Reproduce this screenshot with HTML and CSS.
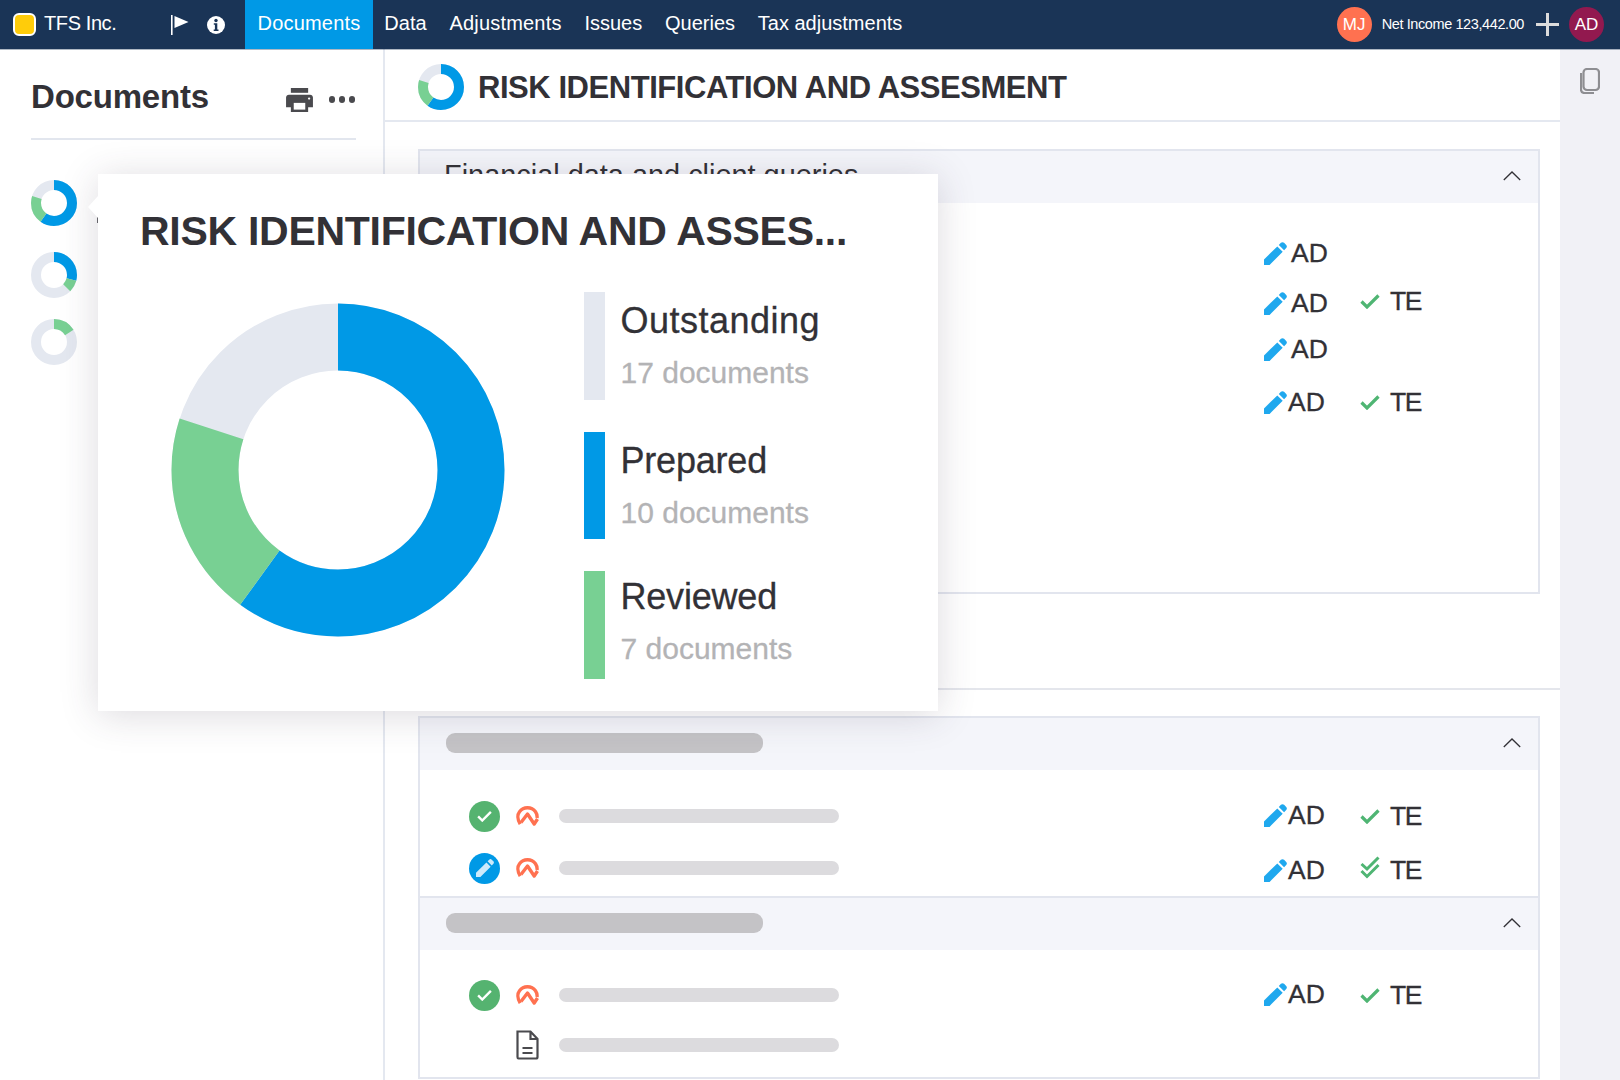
FILE: index.html
```html
<!DOCTYPE html>
<html lang="en">
<head>
<meta charset="utf-8">
<title>Documents</title>
<link rel="stylesheet" href="styles.css">
</head>
<body>
<svg class="defs" width="0" height="0" aria-hidden="true">
  <defs>
    <symbol id="i-pencil" viewBox="0 0 23 23"><path d="M0 17.500L13.300 4.400l5.400 5.400L5.600 23H0zM14.800 2.900L16.900.8c.9-.9 2.300-.9 3.200 0l2.100 2.100c.9.900.9 2.300 0 3.200l-2.100 2.100z"/></symbol>
    <symbol id="i-check" viewBox="0 0 20 16"><path d="M1.5 8.5l5.5 5.5L18.5 2.5" fill="none" stroke="currentColor" stroke-width="3.2"/></symbol>
    <symbol id="i-double" viewBox="0 0 20 23"><path d="M1.5 8l5.5 5L18.5 1.5M1.5 15l5.5 5.5L18.5 9" fill="none" stroke="currentColor" stroke-width="3"/></symbol>
    <symbol id="i-arch" viewBox="0 0 23 20"><path d="M4.200 18.200C1.300 13.500 1.300 8.500 3.500 5.700 5.300 3.200 8.500 1.700 11.500 1.700c3.200 0 6.200 1.500 8 4 1.300 1.900 1.800 4.200 1.500 6.300" fill="none" stroke="currentColor" stroke-width="3.400"/><path d="M5 16.500l6.500-8.500 6.700 10 3.300-5" fill="none" stroke="currentColor" stroke-width="3.400" stroke-linejoin="round"/></symbol>
    <symbol id="i-doc" viewBox="0 0 23 30"><path d="M1.500 1.500h13l7 7.500v18c0 .8-.7 1.500-1.500 1.500H2.500c-.6 0-1-.5-1-1.500zM14.500 1.500V9h7M6.500 18h10M6.500 23h10" fill="none" stroke="currentColor" stroke-width="2.200"/></symbol>
    <symbol id="i-chevron" viewBox="0 0 18 10"><path d="M.8 9L9 1l8.200 8" fill="none" stroke="currentColor" stroke-width="1.300"/></symbol>
  </defs>
</svg>

<div class="app">
  <header class="topbar">
    <div class="brand">
      <span class="brand-logo"></span>
      <span class="brand-name">TFS Inc.</span>
    </div>
    <div class="top-icons">
      <svg class="flag" viewBox="0 0 18 20"><rect x="0" y="0" width="1.600" height="20" fill="#fff"/><path d="M3.500 1L17.500 7 3.500 13z" fill="#fff"/></svg>
      <svg class="info" viewBox="0 0 18 18"><circle cx="9" cy="9" r="9" fill="#fff"/><circle cx="9" cy="4.500" r="1.700" fill="#1a3456"/><path d="M6.800 7.300h3.500v6.100h1.200v1.500H6.700v-1.500h1.200V8.800H6.800z" fill="#1a3456"/></svg>
    </div>
    <nav class="nav">
      <a class="nav-item is-active">Documents</a>
      <a class="nav-item">Data</a>
      <a class="nav-item nav-item-wide">Adjustments</a>
      <a class="nav-item">Issues</a>
      <a class="nav-item">Queries</a>
      <a class="nav-item">Tax adjustments</a>
    </nav>
    <div class="top-right">
      <span class="avatar avatar-coral">MJ</span>
      <span class="net-income">Net Income 123,442.00</span>
      <span class="plus"></span>
      <span class="avatar avatar-plum">AD</span>
    </div>
  </header>

  <div class="content">
    <aside class="sidebar">
      <div class="side-head">
        <h2 class="side-title">Documents</h2>
        <svg class="print" viewBox="0 0 28 25"><rect x="5" y="0" width="18" height="5" fill="#4a4a4e"/><path d="M3 7h22c1.700 0 3 1.300 3 3v10h-5v5H5v-5H0V10c0-1.700 1.300-3 3-3z" fill="#4a4a4e"/><rect x="8" y="15.500" width="12" height="7" fill="#fff"/><circle cx="24" cy="11" r="1.200" fill="#fff"/></svg>
        <div class="dots"><span></span><span></span><span></span></div>
      </div>
      <ul class="doc-list">
        <li class="doc-item">
          <svg class="mini-donut" viewBox="0 0 46 46">
            <circle class="seg seg-grey" cx="23" cy="23" r="18" pathLength="360" stroke-dasharray="360 0"/>
            <circle class="seg seg-blue" cx="23" cy="23" r="18" pathLength="360" stroke-dasharray="216 144"/>
            <circle class="seg seg-green" cx="23" cy="23" r="18" pathLength="360" stroke-dasharray="72 288" stroke-dashoffset="-216"/>
          </svg>
          <span class="doc-mark"></span>
        </li>
        <li class="doc-item">
          <svg class="mini-donut" viewBox="0 0 46 46">
            <circle class="seg seg-grey" cx="23" cy="23" r="18" pathLength="360" stroke-dasharray="360 0"/>
            <circle class="seg seg-blue" cx="23" cy="23" r="18" pathLength="360" stroke-dasharray="105 255"/>
            <circle class="seg seg-green" cx="23" cy="23" r="18" pathLength="360" stroke-dasharray="30 330" stroke-dashoffset="-105"/>
          </svg>
        </li>
        <li class="doc-item">
          <svg class="mini-donut" viewBox="0 0 46 46">
            <circle class="seg seg-grey" cx="23" cy="23" r="18" pathLength="360" stroke-dasharray="360 0"/>
            <circle class="seg seg-green" cx="23" cy="23" r="18" pathLength="360" stroke-dasharray="58 302"/>
          </svg>
        </li>
      </ul>
    </aside>

    <main class="main">
      <div class="main-head">
        <svg class="head-donut" viewBox="0 0 46 46">
          <circle class="seg seg-grey" cx="23" cy="23" r="18" pathLength="360" stroke-dasharray="360 0"/>
          <circle class="seg seg-blue" cx="23" cy="23" r="18" pathLength="360" stroke-dasharray="216 144"/>
          <circle class="seg seg-green" cx="23" cy="23" r="18" pathLength="360" stroke-dasharray="72 288" stroke-dashoffset="-216"/>
        </svg>
        <h1 class="main-title">RISK IDENTIFICATION AND ASSESMENT</h1>
      </div>

      <section class="panel panel-first">
        <div class="panel-head">
          <span class="panel-title">Financial data and client queries</span>
          <svg class="chevron"><use href="#i-chevron"/></svg>
        </div>
        <div class="panel-body body-first">
          <div class="row row-first">
            <div class="who who-wide"><svg class="pencil"><use href="#i-pencil"/></svg><span class="who-text">AD</span></div>
          </div>
          <div class="row row-first">
            <div class="who who-wide who-low"><svg class="pencil"><use href="#i-pencil"/></svg><span class="who-text">AD</span></div>
            <div class="who who-check"><svg class="tick"><use href="#i-check"/></svg><span class="who-text">TE</span></div>
          </div>
          <div class="row row-first">
            <div class="who who-wide"><svg class="pencil"><use href="#i-pencil"/></svg><span class="who-text">AD</span></div>
          </div>
          <div class="row row-first row-spaced">
            <div class="who"><svg class="pencil"><use href="#i-pencil"/></svg><span class="who-text">AD</span></div>
            <div class="who who-check"><svg class="tick"><use href="#i-check"/></svg><span class="who-text">TE</span></div>
          </div>
        </div>
      </section>

      <hr class="divider">

      <section class="panel panel-second">
        <div class="panel-head">
          <span class="skeleton-head"></span>
          <svg class="chevron"><use href="#i-chevron"/></svg>
        </div>
        <div class="panel-body body-second">
          <div class="row">
            <span class="status status-green"><svg viewBox="0 0 20 16"><use href="#i-check"/></svg></span>
            <svg class="arch"><use href="#i-arch"/></svg>
            <span class="skeleton-line"></span>
            <div class="who who-high"><svg class="pencil"><use href="#i-pencil"/></svg><span class="who-text">AD</span></div>
            <div class="who who-check"><svg class="tick"><use href="#i-check"/></svg><span class="who-text">TE</span></div>
          </div>
          <div class="row">
            <span class="status status-blue"><svg class="status-pencil"><use href="#i-pencil"/></svg></span>
            <svg class="arch"><use href="#i-arch"/></svg>
            <span class="skeleton-line"></span>
            <div class="who who-low"><svg class="pencil"><use href="#i-pencil"/></svg><span class="who-text">AD</span></div>
            <div class="who who-check who-low"><svg class="tick tick-double"><use href="#i-double"/></svg><span class="who-text">TE</span></div>
          </div>
        </div>
      </section>

      <section class="panel panel-third">
        <div class="panel-head">
          <span class="skeleton-head"></span>
          <svg class="chevron"><use href="#i-chevron"/></svg>
        </div>
        <div class="panel-body body-third">
          <div class="row">
            <span class="status status-green"><svg viewBox="0 0 20 16"><use href="#i-check"/></svg></span>
            <svg class="arch"><use href="#i-arch"/></svg>
            <span class="skeleton-line"></span>
            <div class="who who-high"><svg class="pencil"><use href="#i-pencil"/></svg><span class="who-text">AD</span></div>
            <div class="who who-check"><svg class="tick"><use href="#i-check"/></svg><span class="who-text">TE</span></div>
          </div>
          <div class="row">
            <span class="status status-empty"></span>
            <svg class="doc"><use href="#i-doc"/></svg>
            <span class="skeleton-line"></span>
          </div>
        </div>
      </section>
    </main>

    <aside class="rail">
      <svg class="rail-icon" viewBox="0 0 20 26"><rect x="3.500" y="1" width="15.500" height="21" rx="3.500" fill="none" stroke="#8e8e92" stroke-width="2.200"/><path d="M1 5v16.500C1 23.500 2.500 25 4.500 25H14" fill="none" stroke="#8e8e92" stroke-width="2.200"/></svg>
    </aside>
  </div>

  <div class="popup">
    <span class="popup-arrow"></span>
    <h2 class="popup-title">RISK IDENTIFICATION AND ASSES...</h2>
    <div class="popup-body">
      <svg class="big-donut" viewBox="0 0 334 334">
        <circle class="big-seg big-grey" cx="167" cy="167" r="133" pathLength="360" stroke-dasharray="360 0"/>
        <circle class="big-seg big-blue" cx="167" cy="167" r="133" pathLength="360" stroke-dasharray="216 144"/>
        <circle class="big-seg big-green" cx="167" cy="167" r="133" pathLength="360" stroke-dasharray="72 288" stroke-dashoffset="-216"/>
      </svg>
      <ul class="legend">
        <li class="legend-item">
          <span class="swatch swatch-grey"></span>
          <div class="legend-text"><div class="legend-name legend-name-wide">Outstanding</div><div class="legend-count">17 documents</div></div>
        </li>
        <li class="legend-item">
          <span class="swatch swatch-blue"></span>
          <div class="legend-text"><div class="legend-name">Prepared</div><div class="legend-count">10 documents</div></div>
        </li>
        <li class="legend-item legend-item-tight">
          <span class="swatch swatch-green"></span>
          <div class="legend-text"><div class="legend-name">Reviewed</div><div class="legend-count">7 documents</div></div>
        </li>
      </ul>
    </div>
  </div>
</div>
</body>
</html>
```

FILE: styles.css
```css
* { box-sizing: border-box; }
html, body { margin: 0; padding: 0; }
body {
  font-family: "Liberation Sans", Arial, sans-serif;
  color: #323136;
  background: #fff;
}
h1, h2, ul { margin: 0; padding: 0; }
ul { list-style: none; }
.defs { position: absolute; }

.app {
  position: relative;
  width: 1620px;
  height: 1080px;
  overflow: hidden;
  display: flex;
  flex-direction: column;
}

/* top bar */
.topbar {
  position: relative;
  flex: 0 0 49px;
  display: flex;
  align-items: stretch;
  background: #1a3456;
  color: #fff;
  font-size: 20px;
  box-shadow: 0 1px 0 rgba(26, 52, 86, .35);
}
.brand { width: 171px; display: flex; align-items: center; padding-left: 13px; }
.brand-logo {
  width: 23px; height: 23px;
  background: #ffcc0a;
  border: 2px solid #fff;
  border-radius: 6px;
  margin-right: 8px;
}
.brand-name { letter-spacing: -.4px; padding-bottom: 2px; }
.top-icons { width: 74px; display: flex; align-items: center; }
.flag { width: 18px; height: 20px; }
.info { width: 18px; height: 18px; margin-left: 18px; }
.nav { display: flex; }
.nav-item {
  display: flex;
  align-items: center;
  padding: 0 11.400px 2px;
  color: #fff;
}
.nav-item.is-active { background: #0099e6; padding: 0 12.500px 2px; letter-spacing: .2px; }
.nav-item-wide { letter-spacing: .2px; }
.top-right { margin-left: auto; display: flex; align-items: center; padding-right: 16px; }
.avatar {
  width: 35px; height: 35px;
  border-radius: 50%;
  display: flex; align-items: center; justify-content: center;
  font-size: 17px;
  color: #fff;
}
.avatar-coral { background: #ff7150; }
.avatar-plum { background: #92194f; }
.net-income { font-size: 14.500px; margin-left: 10px; letter-spacing: -.4px; padding-bottom: 1px; }
.plus {
  position: relative;
  width: 23px; height: 23px;
  margin: 0 10px 0 12px;
  background:
    linear-gradient(#dcdcdc, #dcdcdc) center / 23px 3px no-repeat,
    linear-gradient(#dcdcdc, #dcdcdc) center / 3px 23px no-repeat;
}

.content { flex: 1; display: flex; min-height: 0; }

/* sidebar */
.sidebar {
  flex: 0 0 385px;
  border-right: 2px solid #e4e8f0;
  padding: 0 27px 0 31px;
}
.side-head {
  height: 91px;
  padding-top: 26px;
  display: flex;
  align-items: flex-start;
  border-bottom: 2px solid #e2e6ee;
}
.side-title { font-size: 33px; line-height: 44px; font-weight: 700; flex: 1; letter-spacing: -.2px; }
.print { width: 27px; height: 24px; margin: 13px 16px 0 0; }
.dots { display: flex; gap: 3.500px; margin: 21px 1px 0 0; }
.dots span { width: 6.500px; height: 6.500px; border-radius: 50%; background: #4a4a4e; }
.doc-list { padding-top: 40px; }
.doc-item { height: 46px; display: flex; align-items: center; margin-bottom: 26px; }
.doc-item:nth-child(2) { margin-bottom: 21px; }
.mini-donut { width: 46px; height: 46px; flex: none; transform: rotate(-90deg); }
.doc-mark { width: 10px; height: 9px; margin: 30px 0 0 20px; background: #6a6a6e; }
.seg { fill: none; stroke-width: 10; }
.seg-grey { stroke: #e4e8f0; }
.seg-blue { stroke: #0099e6; }
.seg-green { stroke: #78d093; }

/* main */
.main { flex: 1; min-width: 0; }
.main-head {
  height: 73px;
  border-bottom: 2px solid #e4e8f0;
  display: flex;
  align-items: center;
  padding: 5px 0 0 33px;
}
.head-donut { width: 46px; height: 46px; transform: rotate(-90deg); }
.main-title { margin: 1px 0 0 14px; font-size: 31px; font-weight: 700; letter-spacing: -.45px; }

.panel {
  margin: 0 20px 0 33px;
  border: 2px solid #e2e5ee;
}
.panel-first { margin-top: 27px; height: 445px; }
.panel-second { border-bottom: 0; height: 180px; }
.panel-third { border-top: 2px solid #e2e5ee; height: 183px; }
.panel-head {
  height: 52px;
  background: #f4f5fa;
  display: flex;
  align-items: center;
  justify-content: space-between;
  padding: 0 17px 0 26px;
}
.panel-title { font-size: 28.900px; margin: -4px 0 0 -2px; }
.chevron { width: 18px; height: 10px; color: #323136; margin-top: -2px; }
.divider { border: 0; height: 2px; background: #e4e6ec; margin: 94px 0 26px; }
.skeleton-head { width: 317px; height: 20px; border-radius: 9px; background: #c4c3c6; margin-top: -2px; }

.row { height: 52px; display: flex; align-items: center; padding-left: 49px; }
.row-first { height: 48px; padding-left: 844px; }
.row-spaced { margin-top: 5px; }
.body-first { padding-top: 26px; }
.body-second { padding-top: 20px; }
.body-third { padding-top: 20px; }
.body-third .row { height: 50px; }

.status {
  flex: none;
  width: 31px; height: 31px;
  border-radius: 50%;
  display: flex; align-items: center; justify-content: center;
  color: #fff;
}
.status svg { width: 15px; height: 12px; }
.status-green { background: #55b370; }
.status-blue { background: #0099e6; }
.status .status-pencil { width: 18px; height: 18px; fill: #cdeafb; }
.status-empty { background: none; }
.arch { flex: none; width: 23px; height: 20px; margin-left: 16px; color: #ff7150; }
.doc { flex: none; width: 23px; height: 30px; margin-left: 16px; color: #4a4a4e; }
.skeleton-line {
  flex: none;
  width: 280px; height: 14px;
  border-radius: 7px;
  background: #dcdbde;
  margin: 0 425px 0 20px;
}
.who { display: flex; align-items: center; width: 96px; flex: none; }
.pencil { width: 23px; height: 23px; fill: #1fa8ee; flex: none; }
.who-text { font-size: 26.500px; margin-left: 1px; -webkit-text-stroke: .3px #323136; }
.who-wide .who-text { margin-left: 4px; }
.who-check .who-text { margin-left: 10px; letter-spacing: -1.500px; }
.who-low { margin-top: 4px; }
.who-high { margin-top: -2px; }
.tick { width: 20px; height: 16px; color: #4fb573; flex: none; }
.tick-double { height: 23px; margin-top: -6px; }

/* right rail */
.rail { flex: 0 0 60px; background: #f1f1f6; padding: 19px 0 0 20px; }
.rail-icon { display: block; width: 20px; height: 26px; }

/* popup */
.popup {
  position: absolute;
  left: 98px;
  top: 174px;
  width: 840px;
  height: 537px;
  background: #fff;
  box-shadow: 0 4px 36px rgba(60, 50, 70, .18);
  padding: 32px 0 0 42px;
}
.popup-arrow {
  position: absolute;
  left: -10px;
  top: 22px;
  width: 0; height: 0;
  border-style: solid;
  border-width: 11px 10px 11px 0;
  border-color: transparent #fff transparent transparent;
}
.popup-title { font-size: 41px; line-height: 50px; font-weight: 700; white-space: nowrap; letter-spacing: -.28px; }
.popup-body { display: flex; margin-top: 36px; }
.big-donut { flex: none; width: 334px; height: 334px; margin: 11px 0 0 31px; transform: rotate(-90deg); }
.big-seg { fill: none; stroke-width: 67; }
.big-grey { stroke: #e4e8f0; }
.big-blue { stroke: #0099e6; }
.big-green { stroke: #78d093; }
.legend { margin-left: 79px; display: flex; flex-direction: column; gap: 32px; }
.legend-item { display: flex; height: 107.500px; }
.swatch { flex: none; width: 20.500px; }
.swatch-grey { background: #e4e8f0; }
.swatch-blue { background: #0099e6; }
.swatch-green { background: #78d093; }
.legend-text { padding: 9px 0 0 16px; }
.legend-item-tight .legend-text { padding-top: 6px; }
.legend-name { font-size: 36px; line-height: 40px; letter-spacing: -.2px; -webkit-text-stroke: .3px #323136; }
.legend-name-wide { letter-spacing: .5px; }
.legend-count { font-size: 30px; line-height: 36px; margin-top: 14px; color: #b3b3b5; -webkit-text-stroke: .3px #b3b3b5; }
```
